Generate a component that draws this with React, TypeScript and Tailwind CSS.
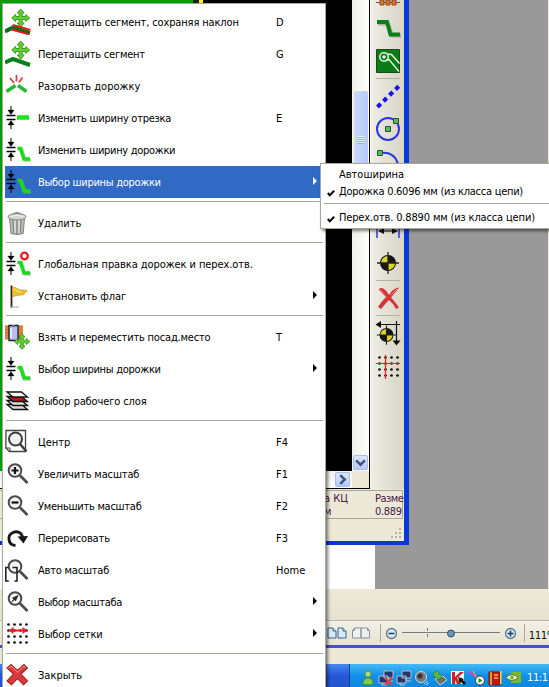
import type { ReactNode } from 'react';

const Svg = ({ children, className = 'h-[26px] w-[26px]' }: { children: ReactNode; className?: string }) => (
  <svg viewBox="0 0 26 26" fill="none" className={`block shrink-0 ${className}`}>{children}</svg>
);

const MOVE = 'M0-9l3.500 4h-2v3.500h3.500v-2L9 0 5 3.500v-2H1.500V5h2L0 9l-3.500-4h2V1.500H-5v2L-9 0l4-3.500v2h3.500V-5h-2z';
const Move = ({ x, y, s = 1 }: { x: number; y: number; s?: number }) => (
  <path d={MOVE} transform={`translate(${x} ${y}) scale(${s})`} fill="#5fd02c" stroke="#35931c" strokeWidth=".9" />
);
const Press = () => (
  <g stroke="#000" fill="#000">
    <path d="M1.500 10.500h9M1.500 14.500h9" strokeWidth="1.500" />
    <path d="M6 1v7M6 17v7" strokeWidth="1" />
    <path d="M2.800 5h6.400L6 9.500zM2.800 20h6.400L6 15.500z" strokeWidth=".3" />
  </g>
);
const Bend = () => (
  <g strokeWidth="3.600">
    <path d="M14 12h2.500l3.500 11H26" stroke="#999" opacity=".55" />
    <path d="M12.500 11.500H15.500l3.500 10.500H25" stroke="#19dc19" />
  </g>
);

const DragKeep = () => <Svg><Move x={15.7} y={9} /><path d="M0 22.500l8-4 17 5.500" stroke="#076d1a" strokeWidth="4" /><path d="M8 16l17.500 4.800M6.500 20.500L24 25.300" stroke="#f21515" strokeWidth="1.900" /></Svg>;
const Drag = () => <Svg><Move x={15.7} y={9} /><path d="M0 21.500l8-3.500 17 6" stroke="#087f1b" strokeWidth="4" /></Svg>;
const Break = () => <Svg><path d="M1.500 18.500L10.500 12.500M13 12.500l8.500 6" stroke="#28b932" strokeWidth="3.500" /><path d="M5 5l4 5M11.500 2v6.500M17.500 4.500L14 9.500" stroke="#e23f43" strokeWidth="1.800" /></Svg>;
const WidthSeg = () => <Svg><Press /><path d="M12 12.500h12" stroke="#19e519" strokeWidth="4.500" /></Svg>;
const WidthTrack = () => <Svg><Press /><Bend /></Svg>;
const GlobalEdit = () => <Svg><Press /><Bend /><circle cx="19.500" cy="5" r="3.300" stroke="#ee1c1c" strokeWidth="2.300" fill="#fff" /></Svg>;
const Trash = () => (
  <Svg>
    <path d="M4.500 8h15l-1.300 15.500Q12 25.500 6 23.500z" fill="#bdbdb8" stroke="#83837e" />
    <path d="M8 10l.7 13M12 10v14M16 10l-.7 13" stroke="#7f7f7b" strokeWidth="1.100" />
    <path d="M10 10v13M14 10v13" stroke="#eee" />
    <ellipse cx="12" cy="6.800" rx="9" ry="3.200" fill="#d6d6d0" stroke="#858580" />
    <path d="M8 4.500Q12 .5 16 4.500" stroke="#94948e" strokeWidth="1.400" />
    <path d="M6 6.500q6-2.500 12 0" stroke="#f7f7f4" />
  </Svg>
);
const Flag = () => (
  <Svg>
    <path d="M6.500 2.500v22" stroke="#2c2113" strokeWidth="1.800" />
    <path d="M5 24h9" stroke="#aaa" />
    <path d="M7.500 4c4 0 5 3 9 3 3 0 4 0 6 1-3 1-3 3-4 4-4 0-7 0-11 2z" fill="#e9bf2d" stroke="#bd9420" strokeWidth=".6" />
    <path d="M8 6c3 1 5 3 8 3" stroke="#f8e27c" strokeWidth="1.300" />
  </Svg>
);
const Footprint = () => (
  <Svg>
    <path d="M0 1.500h18v14H0z" fill="#d5752c" />
    <path d="M0 4h18M0 7h18M0 10h18M0 13h18" stroke="#f0a865" strokeWidth=".7" />
    <path d="M4 1.500h9v15H4z" fill="#b8bdf1" stroke="#171b30" strokeWidth="1.300" />
    <path d="M7 1.500q1.500 3 3 0" stroke="#171b30" fill="#fff" />
    <path d="M6 4v10" stroke="#eff" strokeWidth="1.500" />
    <Move x={17} y={17.500} s={0.88} />
  </Svg>
);
const Layers = () => (
  <Svg>
    <g stroke="#111" strokeWidth="1.300">
      <path d="M2 16.500h14.500l6 5H8z" fill="#ddd" /><path d="M2 12.500h14.500l6 5H8z" fill="#d7dcd7" />
      <path d="M2 8.500h14.500l6 5H8z" fill="#c11418" /><path d="M2 4h14.500l6 5H8z" fill="#fff" />
    </g>
  </Svg>
);
const Glass = ({ r = 6.300 }: { r?: number }) => <g stroke="#4a4a4a"><circle cx="10" cy="9.500" r={r} fill="#f5f5f5" strokeWidth="2" /><path d="M15 14.500l7.500 7.500" strokeWidth="2.600" /></g>;
const Center = () => <Svg><path d="M1 1.500h19.500v21H4.500L.8 19z" fill="#fff" stroke="#444" strokeWidth="1.300" /><path d="M1 19h4v4" stroke="#444" /><circle cx="10.500" cy="10" r="6.500" fill="#f0f0f0" stroke="#3c3c3c" strokeWidth="2" /><path d="M15 15l6.500 7.500" stroke="#3c3c3c" strokeWidth="2.500" /></Svg>;
const ZoomIn = () => <Svg><Glass /><path d="M6.500 9.500h7M10 6v7" stroke="#111" strokeWidth="2.200" /></Svg>;
const ZoomOut = () => <Svg><Glass /><path d="M6.500 9.500h7" stroke="#111" strokeWidth="2.200" /></Svg>;
const Redraw = () => <Svg><path d="M10.500 20.500C2.500 20 2 10 8 7.500c4.500-2 9 .5 9.500 5" stroke="#171717" strokeWidth="2.800" /><path d="M12.500 11.500l10.500-.5-4.500 7.500z" fill="#171717" /></Svg>;
const ZoomAuto = () => <Svg><Glass /><path d="M3.500 10.500H.8V24h3M7.500 10.500h4.500V24H9.500" stroke="#222" strokeWidth="1.600" /></Svg>;
const ZoomPick = () => <Svg><Glass /><path d="M6.500 13l2.500-3-1.500-1L13 6.500l-2.500 5.500-1-1.500z" fill="#222" stroke="#222" strokeWidth=".7" /></Svg>;
const dots = [3.500, 9.500, 15.500, 21.500];
const Dots = () => <>{dots.flatMap((x) => dots.map((y) => <circle key={`${x}-${y}`} cx={x} cy={y} r="1.350" fill="#111" />))}</>;
const Grid = () => <Svg><Dots /><path d="M7 9.500h12" stroke="#f21c1c" strokeWidth="2" /><path d="M3.500 9.500l5-3.500v7zM22.500 9.500l-5-3.500v7z" fill="#f21c1c" /></Svg>;
const Close = () => <Svg><path d="M2 6l4-3.500 6.500 6 6.500-6L22.500 6 16 12l6.500 7-4 3.800-6-6.300-6 6.300L2 19l6.500-7z" fill="#db393a" stroke="#9e2224" strokeWidth="1.100" /><path d="M3.500 6L6 4l6.500 6L19 4l2 2" stroke="#f5a09b" /></Svg>;

type Item = { icon: () => ReactNode; text: string; track?: string; hotkey?: string; sub?: boolean; active?: boolean };
const groups: Item[][] = [
  [
    { icon: DragKeep, text: 'Перетащить сегмент, сохраняя наклон', track: 'tracking-[-0.14px]', hotkey: 'D' },
    { icon: Drag, text: 'Перетащить сегмент', track: 'tracking-[-0.22px]', hotkey: 'G' },
    { icon: Break, text: 'Разорвать дорожку' },
    { icon: WidthSeg, text: 'Изменить ширину отрезка', track: 'tracking-[-0.26px]', hotkey: 'E' },
    { icon: WidthTrack, text: 'Изменить ширину дорожки', track: 'tracking-[-0.3px]' },
    { icon: WidthTrack, text: 'Выбор ширины дорожки', track: 'tracking-[-0.28px]', sub: true, active: true },
  ],
  [{ icon: Trash, text: 'Удалить' }],
  [
    { icon: GlobalEdit, text: 'Глобальная правка дорожек и перех.отв.', track: 'tracking-[-0.08px]' },
    { icon: Flag, text: 'Установить флаг', track: 'tracking-[-0.05px]', sub: true },
  ],
  [
    { icon: Footprint, text: 'Взять и переместить посад.место', track: 'tracking-[-0.18px]', hotkey: 'T' },
    { icon: WidthTrack, text: 'Выбор ширины дорожки', track: 'tracking-[-0.28px]', sub: true },
    { icon: Layers, text: 'Выбор рабочего слоя', track: 'tracking-[-0.12px]' },
  ],
  [
    { icon: Center, text: 'Центр', hotkey: 'F4' },
    { icon: ZoomIn, text: 'Увеличить масштаб', track: 'tracking-[-0.14px]', hotkey: 'F1' },
    { icon: ZoomOut, text: 'Уменьшить масштаб', track: 'tracking-[-0.27px]', hotkey: 'F2' },
    { icon: Redraw, text: 'Перерисовать', track: 'tracking-[-0.15px]', hotkey: 'F3' },
    { icon: ZoomAuto, text: 'Авто масштаб', track: 'tracking-[-0.2px]', hotkey: 'Home' },
    { icon: ZoomPick, text: 'Выбор масштаба', track: 'tracking-[-0.3px]', sub: true },
    { icon: Grid, text: 'Выбор сетки', track: 'tracking-[-0.12px]', sub: true },
  ],
  [{ icon: Close, text: 'Закрыть' }],
];

function ContextMenu() {
  return (
    <div className="absolute left-[2px] top-[3px] h-[700px] w-[324px] border border-[#aca899] bg-white px-[2px] pt-[2px] shadow-[2px_2px_3px_rgba(0,0,0,0.5)]">
      {groups.map((g, i) => (
        <div key={i}>
          {i > 0 && <div className="flex h-[9px] items-start pl-px pt-[3px]"><div className="h-px w-full bg-[#aca899]" /></div>}
          {g.map((m, j) => (
            <div key={j} className={`flex h-8 items-center ${m.active ? 'bg-[#316ac5] text-white' : ''}`}>
              <m.icon />
              <span className={`ml-[7px] w-[238px] shrink-0 whitespace-nowrap pt-[2px] ${m.track ?? ''}`}>{m.text}</span>
              <span className="w-[37px] shrink-0 pt-[2px]">{m.hotkey}</span>
              {m.sub && <svg viewBox="0 0 4 8" className="mb-[3px] h-2 w-1 shrink-0"><path d="M0 0l4 4-4 4z" fill="currentColor" /></svg>}
            </div>
          ))}
        </div>
      ))}
    </div>
  );
}

function SubRow({ text, checked, track = '' }: { text: string; checked?: boolean; track?: string }) {
  return (
    <div className="flex h-[17px] items-center">
      <div className="flex w-[18px] shrink-0 justify-center pl-[2px]">
        {checked && <svg viewBox="0 0 8 7" className="mt-[3px] h-[7px] w-2"><path d="M.8 3l2 2.300L7.200.8" fill="none" stroke="#000" strokeWidth="2" /></svg>}
      </div>
      <span className={`whitespace-nowrap ${track}`}>{text}</span>
    </div>
  );
}

const Target = ({ x = 13, y = 13, r = 8 }: { x?: number; y?: number; r?: number }) => (
  <g transform={`translate(${x} ${y}) scale(${r / 8})`}>
    <circle r="8" fill="#171717" /><path d="M0 0V-7A7 7 0 0 0-7 0zM0 0V7A7 7 0 0 0 7 0z" fill="#ded51d" /><path d="M0-11V11M-11 0H11" stroke="#222" strokeWidth="1.300" />
  </g>
);
const Cell = ({ children, className = 'h-[33px]' }: { children?: ReactNode; className?: string }) => (
  <div className={`flex w-full shrink-0 items-center justify-center ${className}`}>{children}</div>
);
const Rule = () => <div className="h-px w-6 shrink-0 bg-[#b5b2a3]" />;

function Toolbar() {
  return (
    <div className="flex w-[33px] shrink-0 flex-col items-center bg-gradient-to-r from-[#f0efe5] via-[#e2e0d4] to-[#d8d5c6]">
      <div className="flex h-[11px] w-full shrink-0 items-start justify-center">
        <svg viewBox="0 0 24 6" className="h-[6px] w-6"><path d="M0 2.500h24" stroke="#555" /><path d="M4 0h4v5H4zM10 0h4v5h-4zM16 0h4v5h-4z" fill="#dc792d" stroke="#8b4919" /></svg>
      </div>
      <Cell><Svg><path d="M3 8.500h10l4 12h9" stroke="#aaa" strokeWidth="3.800" /><path d="M2 7h10l3.500 12.500H25" stroke="#078018" strokeWidth="3.900" /></Svg></Cell>
      <Cell className="h-[34px]"><Svg><path d="M1.500 1.500h23v23h-23z" fill="#087d15" stroke="#174c1a" /><circle cx="9" cy="9" r="4.200" stroke="#e9f2e4" strokeWidth="1.500" /><circle cx="9" cy="9" r="1.800" fill="#fff" /><path d="M12 6l4.500.5L24.500 15.500M11 12.500l3-1 10 12" stroke="#e9f2e4" strokeWidth="1.400" /></Svg></Cell>
      <Rule />
      <Cell><Svg><path d="M2.500 24L24 3" stroke="#1515ee" strokeWidth="4.200" strokeDasharray="4.500 3.900" /></Svg></Cell>
      <Cell><Svg><circle cx="13" cy="13" r="11" stroke="#2936e8" strokeWidth="2" /><path d="M10.500 10.500h5v5h-5zM18.500 2.500h5v5h-5z" fill="#4fbd5b" stroke="#314c34" /></Svg></Cell>
      <Cell><Svg><path d="M5 4c11-2 18 5 18 14" stroke="#2936e8" strokeWidth="2" /><path d="M2.500 1.500h5v5h-5z" fill="#4fbd5b" stroke="#314c34" /></Svg></Cell>
      <Cell className="h-[34px]" />
      <Cell className="h-[34px]"><Svg><path d="M2 4v18M24 4v18" stroke="#2936e8" strokeWidth="1.500" /><path d="M6 15h14" stroke="#111" /><path d="M3 15l6-3v6zM23 15l-6-3v6z" fill="#111" /></Svg></Cell>
      <Cell className="h-[34px]"><Svg><Target /></Svg></Cell>
      <Rule />
      <Cell className="h-[34px]"><Svg><path d="M3.500 4.500Q8 0 14 10 18 3 24 2.500q-2 3-8 10 4 4 8 10l-3 1.500q-3-6-7-9-4 4-8 9l-3-2q3-5 8-10-4-4-7.500-7.500z" fill="#d63338" /><path d="M4.500 4l7 8.500M22 4l-6 6" stroke="#ee8c88" /></Svg></Cell>
      <Rule />
      <Cell className="h-[34px]"><Svg><Target x={11.500} y={15} r={7} /><path d="M2 4.500h23M21.500 1v22" stroke="#111" strokeWidth="1.200" /><path d="M.5 4.500L6 1v7zM21.500 25.500l-4-5h8z" fill="#111" /></Svg></Cell>
      <Cell className="h-[34px]"><Svg><g transform="translate(1 0)"><Dots /></g><path d="M1 9.500h24M10.500 1v24" stroke="#f01d1d" strokeWidth="1.200" /></Svg></Cell>
    </div>
  );
}

const ScrollButton = ({ d }: { d: string }) => (
  <div className="flex h-[15px] w-[15px] shrink-0 items-center justify-center rounded-[2px] border border-[#a6bdf0] bg-gradient-to-b from-[#dce6ff] to-[#b4c9fa]">
    <svg viewBox="0 0 10 10" className="h-[11px] w-[11px]"><path d={d} fill="none" stroke="#405680" strokeWidth="2.300" /></svg>
  </div>
);

function EditorWindow() {
  return (
    <div className="absolute left-0 top-0 flex h-[545px] w-[409px] border-b-4 border-r-[5px] border-[#0838d8] bg-[#ece9d8]">
      <div className="flex w-full flex-col">
        <div className="flex h-[489px]">
          <div className="flex w-[370px] shrink-0 flex-col border-b border-r border-black">
            <div className="flex h-[471px]">
              <div className="w-[193px] bg-[#03a006]" />
              <div className="w-[6px] bg-[#172412]" />
              <div className="w-[4px] bg-[#f6f01b]" />
              <div className="w-[149px] bg-black" />
              <div className="flex w-[17px] flex-col items-center bg-gradient-to-r from-[#f1f0e9] to-[#fefefb]">
                <div className="h-[91px] shrink-0" />
                <div className="flex h-[137px] w-[14px] shrink-0 flex-col items-center gap-px rounded-[2px] bg-gradient-to-r from-[#cad9ff] to-[#b5caf8] pt-[45px]">
                  {[0, 1, 2, 3].map((n) => <div key={n} className="h-px w-[7px] bg-[#eef4fe] shadow-[0_1px_0_#8caae5]" />)}
                </div>
                <div className="flex grow flex-col justify-end pb-px"><ScrollButton d="M1 3l4 4 4-4" /></div>
              </div>
            </div>
            <div className="flex grow justify-end bg-gradient-to-b from-[#f1f0e9] to-[#fefefb]">
              <div className="pt-px"><ScrollButton d="M3 1l4 4-4 4" /></div>
              <div className="ml-[2px] w-[17px] bg-[#ece9d8]" />
            </div>
          </div>
          <div className="w-px shrink-0 bg-[#f8f7f0]" />
          <Toolbar />
        </div>
        <div className="mr-px mt-px flex h-[29px] border-b border-r border-t border-[#aca899] leading-[13px] text-[#482045]">
          <div className="ml-[324px] w-[51px] shrink-0 whitespace-nowrap pt-px">а КЦ<br />м</div>
          <div className="shrink-0 whitespace-nowrap pt-px tracking-[-0.5px]">Разме<br /><span className="tracking-[-0.3px]">0.889</span></div>
        </div>
        <div className="flex grow items-end justify-end pb-[2px] pr-[2px]">
          <svg viewBox="0 0 11 11" className="h-[11px] w-[11px]"><path d="M8 0h2v2H8zM4 4h2v2H4zM8 4h2v2H8zM0 8h2v2H0zM4 8h2v2H4zM8 8h2v2H8z" fill="#b8b4a2" /></svg>
        </div>
      </div>
    </div>
  );
}

const Page = ({ className }: { className: string }) => (
  <svg viewBox="0 0 10 12" className="h-3 w-[10px] shrink-0"><path d="M1 1h5l3 3v7H1z" className={className} /><path d="M6 1v3h3" fill="none" className={className} /></svg>
);
const Spread = () => (
  <svg viewBox="0 0 18 12" className="ml-[5px] h-3 w-[18px] shrink-0"><path d="M.5 3.500l2-2.500H9v10H.5zM9 1h6.500l2 2.500V11H9z" fill="#eef0ef" stroke="#87939c" /><path d="M.5 3.500h2V1M17.500 3.500h-2V1" fill="none" stroke="#87939c" /></svg>
);
const ZoomButton = ({ plus }: { plus?: boolean }) => (
  <svg viewBox="0 0 13 13" className="h-[13px] w-[13px] shrink-0"><circle cx="6.500" cy="6.500" r="5" fill="#dbe9f3" stroke="#65788d" strokeWidth="1.300" /><path d={plus ? 'M3.500 6.500h6M6.500 3.500v6' : 'M3.500 6.500h6'} stroke="#143e6c" strokeWidth="1.500" /></svg>
);

const Tray = ({ children }: { children: ReactNode }) => <svg viewBox="0 0 16 16" fill="none" className="h-4 w-4 shrink-0">{children}</svg>;
const Monitors = () => <g stroke="#b9c5d0"><path d="M6 1h9v7H6zM1 6h9v7H1z" fill="#24366e" /><path d="M10 8v3h5M4 13v2h5" /></g>;

function BackWindow() {
  return (
    <div className="flex h-[687px] flex-col bg-[#ece9d8]">
      <div className="flex h-[589px] shrink-0">
        <div className="w-[375px] bg-white" />
        <div className="w-[173px] bg-[#999]" />
        <div className="grow bg-[#ece9d8]" />
      </div>
      <div className="h-[32px] shrink-0 border-b border-[#b9b6a4] bg-gradient-to-b from-[#ece9d8] to-[#e6e3d3]" />
      <div className="flex h-[24px] shrink-0 items-center bg-gradient-to-b from-[#f2f0e6] to-[#e6e3d2] pl-[327px]">
        <Page className="fill-[#d9eaf7] stroke-[#356489]" /><Page className="fill-[#d9eaf7] stroke-[#356489]" />
        <Spread />
        <div className="ml-[10px] h-[18px] w-px shrink-0 bg-[#aca899]" />
        <div className="ml-[4px]"><ZoomButton /></div>
        <svg viewBox="0 0 98 14" className="ml-[4px] h-[14px] w-[98px] shrink-0"><path d="M0 6.500h98M25.500 2v3M25.500 8v3" stroke="#777b78" /><circle cx="49" cy="7.500" r="3.500" fill="#6e94b5" stroke="#294d70" /></svg>
        <div className="ml-[4px]"><ZoomButton plus /></div>
        <div className="ml-[7px] h-[18px] w-px shrink-0 bg-[#aca899]" />
        <span className="ml-[4px] w-[20px] whitespace-nowrap pt-[3px] text-[10.500px]">111%</span>
      </div>
      <div className="h-[3px] shrink-0 bg-[#4550c6]" />
      <div className="h-[16px] shrink-0 bg-[#ece9d8]" />
      <div className="flex grow">
        <div className="w-[349px] shrink-0 bg-gradient-to-b from-[#4688f0] via-[#2359d8] to-[#2054cf]" />
        <div className="w-px shrink-0 bg-[#0c398d]" />
        <div className="flex grow items-center gap-[2px] bg-gradient-to-b from-[#43bbf6] via-[#118fe9] to-[#0d88df] pl-[10px] pt-[5px] text-white">
          <Tray><circle cx="8" cy="4" r="3" fill="#a8e174" stroke="#589234" /><path d="M3 14c-1-8 11-8 10 0q-5 2-10 0z" fill="#80ce48" stroke="#4a8b2a" /></Tray>
          <Tray><Monitors /><path d="M7 8l7 7M14 8l-7 7" stroke="#e73a3a" strokeWidth="2" /></Tray>
          <Tray><Monitors /></Tray>
          <Tray><circle cx="7" cy="7" r="5.500" fill="#777" stroke="#d7d7d4" /><circle cx="6" cy="6" r="2.500" fill="#333" /><path d="M10 14l4-3M12 15l3-2" stroke="#b4d7ff" /></Tray>
          <Tray><path d="M3 9l8-3 4 4-7 5z" fill="#69716b" stroke="#ced3cc" /><path d="M1 3l5-2 1 3 3 1-3 5-2-3-2 1z" fill="#57bd43" stroke="#267725" strokeWidth=".6" /></Tray>
          <Tray><path d="M1 1h13v13H1z" fill="#fff" /><path d="M2 2h3v5l5-5h4L7 8l4 6H7L5 10v4H2z" fill="#d71e22" /><path d="M8 7l6 2-1 1 3 3-2 2-3-3-1 2z" fill="#111" /></Tray>
          <div className="pl-px"><Tray><path d="M1 2l10 8" stroke="#e33bb9" strokeWidth="2" /><path d="M4 1l3 6" stroke="#eb2" /><circle cx="11" cy="10.500" r="4.500" fill="#fff" stroke="#333" /><path d="M9.500 8v5l4-2.500z" fill="#168e29" /></Tray></div>
          <Tray><path d="M2 2h11v13H2z" fill="#be1717" stroke="#701515" /><path d="M4 2v13M7 5h4M7 8h4" stroke="#f3c434" strokeWidth="1.500" /><path d="M13 1h1.500v13H13z" fill="#f6d84c" /></Tray>
          <Tray><path d="M6 2h10v11H6z" fill="#79b72b" /><path d="M1 7.500q6-6 12 0-6 6-12 0z" fill="#eef5df" stroke="#577824" /><circle cx="7" cy="7.500" r="2" fill="#7bb52c" /></Tray>
          <span className="ml-[4px] whitespace-nowrap tracking-[-0.4px]">11:1</span>
        </div>
      </div>
    </div>
  );
}

export default function App() {
  return (
    <div className="relative h-[687px] w-[549px] overflow-hidden bg-[#ece9d8] font-['DejaVu_Sans_Condensed','DejaVu_Sans',sans-serif] text-[11px] leading-[14px] text-black">
      <BackWindow />
      <EditorWindow />
      <ContextMenu />
      <div className="absolute left-[320px] top-[163px] h-[66px] w-[240px] border border-[#aca899] bg-white pt-[2px] shadow-[2px_2px_3px_rgba(0,0,0,0.5)]">
        <SubRow text="Автоширина" />
        <SubRow text="Дорожка 0.6096 мм (из класса цепи)" checked track="tracking-[-0.26px]" />
        <div className="flex h-[9px] items-start pl-[3px] pt-[3px]"><div className="h-px w-full bg-[#aca899]" /></div>
        <SubRow text="Перех.отв. 0.8890 мм (из класса цепи)" checked track="tracking-[-0.15px]" />
      </div>
    </div>
  );
}
